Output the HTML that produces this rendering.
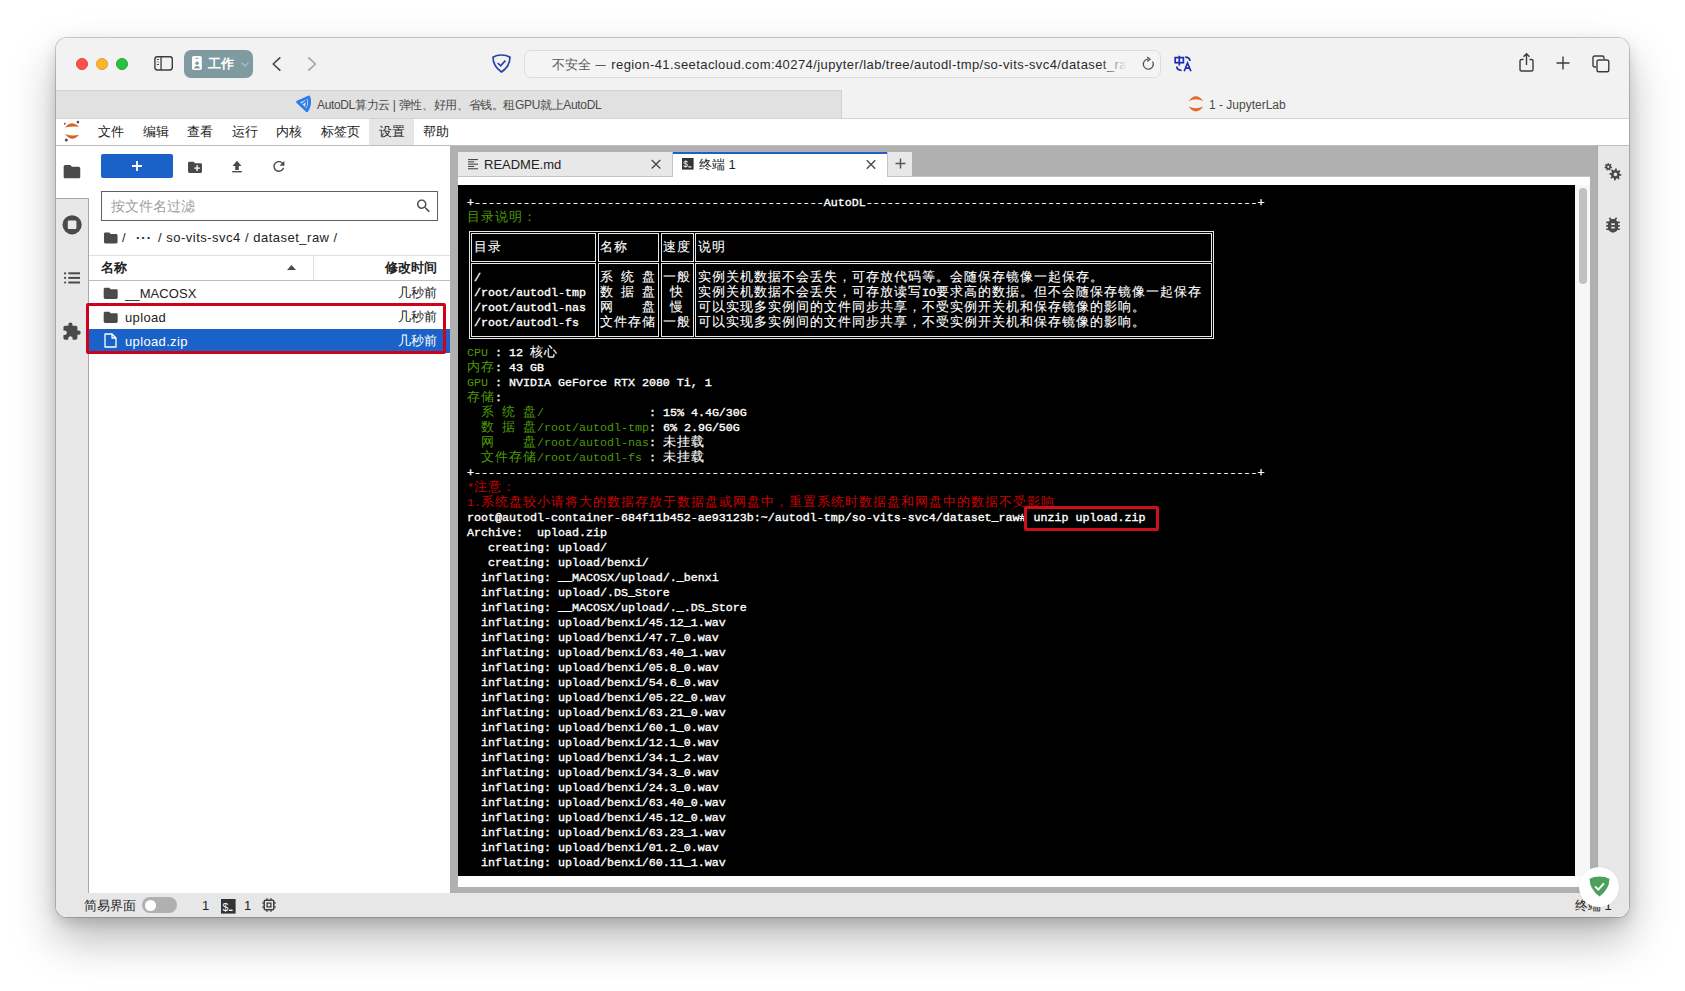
<!DOCTYPE html>
<html><head><meta charset="utf-8">
<style>
*{box-sizing:border-box}
html,body{margin:0;padding:0}
body{width:1685px;height:991px;background:#fff;position:relative;overflow:hidden;font-family:"Liberation Sans",sans-serif;color:#222}
.a{position:absolute}
#win{position:absolute;left:56px;top:38px;width:1573px;height:879px;border-radius:11px;overflow:hidden;background:#f2f2f2;box-shadow:0 22px 45px rgba(0,0,0,.28),0 6px 14px rgba(0,0,0,.14),0 0 0 1px rgba(0,0,0,.18)}
#in{position:absolute;left:-56px;top:-38px;width:1685px;height:991px}
.tl{position:absolute;left:467px;white-space:pre;font-family:"Liberation Mono",monospace;font-weight:normal;-webkit-text-stroke-width:0.35px;font-size:11.667px;line-height:15px;color:#fff}
.tl i{font-style:normal;display:inline-block;width:14px;font-size:12.5px;font-weight:500;-webkit-text-stroke-width:0.1px}
.g,.g i{color:#4e9a06;font-weight:normal;-webkit-text-stroke-width:0}
.r,.r i{color:#cc0000;font-weight:normal;-webkit-text-stroke-width:0}
.menu{position:absolute;top:119px;height:26px;line-height:26px;font-size:13px;color:#222}
.fb{font-size:13px;color:#222}
svg{position:absolute;overflow:visible}
</style></head><body>
<div id="win"><div id="in">
  <!-- toolbar -->
  <div class="a" style="left:56px;top:37px;width:1573px;height:54px;background:#f2f2f2"></div>
  <!-- traffic lights -->
  <div class="a" style="left:76px;top:58px;width:12px;height:12px;border-radius:50%;background:#fe4f4b;border:0.5px solid #e0443e"></div>
  <div class="a" style="left:96px;top:58px;width:12px;height:12px;border-radius:50%;background:#fdb32a;border:0.5px solid #dea123"></div>
  <div class="a" style="left:116px;top:58px;width:12px;height:12px;border-radius:50%;background:#2ac13e;border:0.5px solid #1aab29"></div>
  <!-- sidebar icon -->
  <svg style="left:0;top:0" width="1" height="1"><rect x="154.9" y="56.7" width="17.4" height="13.3" rx="2.4" fill="none" stroke="#3c3c3c" stroke-width="1.4"/><rect x="160.4" y="57" width="1.3" height="13" fill="#3c3c3c"/><g fill="#3c3c3c"><rect x="156.8" y="59" width="2.2" height="0.9"/><rect x="156.8" y="61.5" width="2.2" height="0.9" opacity=".6"/><rect x="156.8" y="64" width="2.2" height="0.9"/></g></svg>
  <!-- work profile button -->
  <div class="a" style="left:184px;top:50px;width:69px;height:28px;border-radius:7px;background:#7f9ba0"></div>
  <svg style="left:0;top:0" width="1" height="1"><rect x="192" y="56" width="9.8" height="14" rx="1.8" fill="#fff"/><rect x="195.5" y="57.9" width="3" height="0.9" fill="#7f9ba0"/><circle cx="197" cy="63.3" r="1.8" fill="#7f9ba0"/><path d="M193.8 68.6 Q194.5 65.8 197 65.8 Q199.5 65.8 200.2 68.6Z" fill="#7f9ba0"/></svg>
  <div class="a" style="left:207.5px;top:55px;font-size:13px;font-weight:bold;color:#fff;line-height:18px">工作</div>
  <svg style="left:241px;top:62px" width="8" height="5" viewBox="0 0 8 5"><path d="M0.5 0.5 L4 4 L7.5 0.5" fill="none" stroke="#a9bfc2" stroke-width="1.3"/></svg>
  <!-- back/forward -->
  <svg style="left:272px;top:57px" width="9" height="14" viewBox="0 0 9 14"><path d="M7.8 0.9 L1.2 7 L7.8 13.1" fill="none" stroke="#474747" stroke-width="1.7" stroke-linecap="round" stroke-linejoin="round"/></svg>
  <svg style="left:308px;top:57px" width="9" height="14" viewBox="0 0 9 14"><path d="M0.8 0.9 L7.4 7 L0.8 13.1" fill="none" stroke="#a3a3a3" stroke-width="1.7" stroke-linecap="round" stroke-linejoin="round"/></svg>
  <!-- shield -->
  <svg style="left:492px;top:54px" width="19" height="19" viewBox="0 0 19 19"><path d="M9.5 1 Q14.5 1 18 3.2 Q18 12 9.5 18 Q1 12 1 3.2 Q4.5 1 9.5 1Z" fill="none" stroke="#2c43a8" stroke-width="1.7"/><path d="M5.7 9 L8.6 11.8 L13.4 6.6" fill="none" stroke="#2c43a8" stroke-width="1.7"/></svg>
  <!-- url field -->
  <div class="a" style="left:524px;top:50px;width:637px;height:28px;border-radius:7px;border:1px solid #dcdcdc;background:#f4f4f4"></div>
  <div class="a" style="left:552px;top:56px;font-size:13px;line-height:17px;color:#5a5a5a;white-space:nowrap;width:578px;overflow:hidden">不安全 <span style="display:inline-block;transform:scaleX(0.78);margin:0 1px 0 -1px">—</span> <span style="color:#2b2b2b;letter-spacing:0.42px">region-41.seetacloud.com:40274/jupyter/lab/tree/autodl-tmp/so-vits-svc4/dataset_raw</span></div>
  <div class="a" style="left:1100px;top:52px;width:32px;height:24px;background:linear-gradient(to right,rgba(244,244,244,0),#f4f4f4 85%)"></div>
  <svg style="left:1142px;top:57px" width="13" height="14" viewBox="0 0 13 14"><path d="M10.5 4.5 A5 5 0 1 1 6.5 2.2" fill="none" stroke="#555" stroke-width="1.3"/><path d="M5.2 0 L8 2.2 L5.2 4.4" fill="none" stroke="#555" stroke-width="1.3"/></svg>
  <!-- translate -->
  <svg style="left:1174px;top:55px" width="19" height="18" viewBox="0 0 19 18"><g fill="none" stroke="#1c2fae" stroke-width="1.7"><rect x="1.2" y="2.6" width="8.2" height="5.1"/><path d="M5.3 0.8 V10.6"/><path d="M11.2 2.2 Q15.6 2.2 16 6"/><path d="M2.8 11.6 Q2.8 15.3 7.6 15.3"/><path d="M10.2 16.2 L13.5 7.9 L16.9 16.2 M11.4 13.2 H15.7"/></g></svg>
  <!-- share, plus, tabs -->
  <svg style="left:1519px;top:53px" width="15" height="19" viewBox="0 0 15 19"><path d="M4.5 6.5 H2.5 Q1 6.5 1 8 V16.5 Q1 18 2.5 18 H12.5 Q14 18 14 16.5 V8 Q14 6.5 12.5 6.5 H10.5" fill="none" stroke="#3c3c3c" stroke-width="1.4"/><path d="M7.5 12 V1 M4.5 3.8 L7.5 0.8 L10.5 3.8" fill="none" stroke="#3c3c3c" stroke-width="1.4"/></svg>
  <svg style="left:1556px;top:56px" width="14" height="14" viewBox="0 0 14 14"><path d="M7 0.5 V13.5 M0.5 7 H13.5" stroke="#3c3c3c" stroke-width="1.4"/></svg>
  <svg style="left:1592px;top:55px" width="18" height="18" viewBox="0 0 18 18"><path d="M4.3 12 H2.7 Q1 12 1 10.3 V2.7 Q1 1 2.7 1 H10.3 Q12 1 12 2.7 V4.3" fill="none" stroke="#3c3c3c" stroke-width="1.4"/><rect x="5" y="5" width="11.8" height="11.8" rx="1.8" fill="none" stroke="#3c3c3c" stroke-width="1.4"/></svg>

  <!-- browser tabs -->
  <div class="a" style="left:56px;top:90px;width:786px;height:29px;background:#e1e1e1;border-top:1px solid #d2d2d2;border-right:1px solid #d2d2d2;border-bottom:1px solid #d2d2d2"></div>
  <div class="a" style="left:842px;top:91px;width:787px;height:28px;background:#f2f2f2;border-bottom:1px solid #d2d2d2"></div>
  <svg style="left:0;top:0" width="1" height="1"><path d="M297.6 102 L308.8 97 Q311 103.5 307 110.6 Z" fill="none" stroke="#2b7def" stroke-width="3" stroke-linejoin="round"/><path d="M301.5 104.5 L306.5 100.5 L306 107" fill="none" stroke="#2b7def" stroke-width="1.6" stroke-linejoin="round"/></svg>
  <div class="a" style="left:317px;top:97px;font-size:12px;letter-spacing:-0.35px;line-height:16px;color:#4a4a4a;white-space:nowrap">AutoDL算力云 | 弹性、好用、省钱。租GPU就上AutoDL</div>
  <svg style="left:1182px;top:92px" width="28" height="24" viewBox="1182 92 28 24"><path d="M1188.5 101 Q1195.9 91.4 1203.3 101 Q1195.9 97.6 1188.5 101Z M1188.5 106.5 Q1195.9 116.3 1203.3 106.5 Q1195.9 109.9 1188.5 106.5Z" fill="#e2692a"/></svg>
  <div class="a" style="left:1209px;top:97px;font-size:12px;line-height:16px;color:#4a4a4a;white-space:nowrap">1 - JupyterLab</div>

  <!-- jupyter page -->
  <div class="a" style="left:56px;top:119px;width:1573px;height:798px;background:#fff"></div>
  <!-- menubar -->
  <div class="a" style="left:56px;top:145px;width:1573px;height:1px;background:#bdbdbd"></div>
  <svg style="left:58px;top:118px" width="28" height="28" viewBox="58 118 28 28"><path d="M64.9 127.6 Q71.8 119.2 79.1 126.7 Q71.8 125.8 64.9 127.6Z M65 133.9 Q71.8 143 79.1 134.8 Q71.8 136.6 65 133.9Z" fill="#dc5f26"/><circle cx="77.9" cy="122.1" r="1.3" fill="#4d4d4d"/><circle cx="64.9" cy="123.8" r="1" fill="#616161"/><circle cx="66.3" cy="140" r="1.5" fill="#4d4d4d"/></svg>
  <div class="menu" style="left:98px">文件</div>
  <div class="menu" style="left:143px">编辑</div>
  <div class="menu" style="left:187px">查看</div>
  <div class="menu" style="left:232px">运行</div>
  <div class="menu" style="left:276px">内核</div>
  <div class="menu" style="left:321px">标签页</div>
  <div class="a" style="left:369px;top:119px;width:45px;height:26px;background:#e6e6e6"></div>
  <div class="menu" style="left:379px">设置</div>
  <div class="menu" style="left:423px">帮助</div>

  <!-- left sidebar -->
  <div class="a" style="left:56px;top:146px;width:33px;height:747px;background:#e8e8e8;border-right:1px solid #a8a8a8"></div>
  <div class="a" style="left:56px;top:146px;width:33px;height:52px;background:#fff"></div>
  <div class="a" style="left:56px;top:198px;width:33px;height:1px;background:#a8a8a8"></div>
  <svg style="left:0;top:0" width="1" height="1"><path transform="translate(62.00 161.70) scale(0.830)" d="M10 4H4c-1.1 0-1.99.9-1.99 2L2 18c0 1.1.9 2 2 2h16c1.1 0 2-.9 2-2V8c0-1.1-.9-2-2-2h-8l-2-2z" fill="#4a4a4a"/></svg>
  <svg style="left:0;top:0" width="1" height="1"><circle cx="72.1" cy="224.8" r="9.6" fill="#4a4a4a"/><rect x="67.8" y="220.5" width="8.6" height="8.6" rx="1.2" fill="#e8e8e8"/></svg>
  <svg style="left:0;top:0" width="1" height="1"><g fill="#4a4a4a"><rect x="64" y="272.2" width="2.2" height="2.2" rx="1"/><rect x="68.3" y="272.3" width="11.7" height="2"/><rect x="64" y="276.8" width="2.2" height="2.2" rx="1"/><rect x="68.3" y="276.9" width="11.7" height="2"/><rect x="64" y="281.4" width="2.2" height="2.2" rx="1"/><rect x="68.3" y="281.5" width="11.7" height="2"/></g></svg>
  <svg style="left:0;top:0" width="1" height="1"><path transform="translate(61.80 321.60) scale(0.820)" d="M20.5 11H19V7c0-1.1-.9-2-2-2h-4V3.5C13 2.12 11.88 1 10.5 1S8 2.12 8 3.5V5H4c-1.1 0-1.99.9-1.99 2v3.8H3.5c1.49 0 2.7 1.21 2.7 2.7s-1.21 2.7-2.7 2.7H2V20c0 1.1.9 2 2 2h3.8v-1.5c0-1.49 1.21-2.7 2.7-2.7 1.49 0 2.7 1.21 2.7 2.7V22H17c1.1 0 2-.9 2-2v-4h1.5c1.38 0 2.5-1.12 2.5-2.5S21.88 11 20.5 11z" fill="#4a4a4a"/></svg>

  <!-- file browser -->
  <div class="a" style="left:89px;top:146px;width:361px;height:747px;background:#fff"></div>
  <div class="a" style="left:101px;top:154px;width:72px;height:24px;background:#1a62c8;border-radius:2px"></div>
  <svg style="left:131px;top:160px" width="12" height="12" viewBox="0 0 12 12"><path d="M6 1 V11 M1 6 H11" stroke="#fff" stroke-width="1.8"/></svg>
  <svg style="left:0;top:0" width="1" height="1"><path transform="translate(186.60 159.00) scale(0.700)" d="M20 6h-8l-2-2H4c-1.11 0-1.99.89-1.99 2L2 18c0 1.11.89 2 2 2h16c1.11 0 2-.89 2-2V8c0-1.11-.89-2-2-2zm-1 8h-3v3h-2v-3h-3v-2h3V9h2v3h3v2z" fill="#4a4a4a"/></svg>
  <svg style="left:0;top:0" width="1" height="1"><path d="M237 160.8 L241.5 166 H238.8 V170 H235.2 V166 H232.5Z" fill="#4a4a4a"/><rect x="232.2" y="171" width="9.6" height="1.4" fill="#4a4a4a"/></svg>
  <svg style="left:0;top:0" width="1" height="1"><path transform="translate(270.60 158.20) scale(0.690)" d="M17.65 6.35C16.2 4.9 14.21 4 12 4c-4.42 0-7.99 3.58-7.99 8s3.57 8 7.99 8c3.730 0 6.84-2.55 7.73-6h-2.08c-.82 2.33-3.04 4-5.65 4-3.31 0-6-2.69-6-6s2.69-6 6-6c1.66 0 3.14.69 4.22 1.78L13 11h7V4l-2.350 2.350z" fill="#4a4a4a"/></svg>
  <div class="a" style="left:101px;top:191px;width:337px;height:30px;border:1px solid #616161;background:#fff"></div>
  <div class="a" style="left:111px;top:198px;font-size:14px;line-height:17px;color:#9e9e9e">按文件名过滤</div>
  <svg style="left:0;top:0" width="1" height="1"><path transform="translate(414.80 197.20) scale(0.730)" d="M15.5 14h-.79l-.28-.27C15.41 12.59 16 11.110 16 9.5 16 5.91 13.09 3 9.5 3S3 5.91 3 9.5 5.91 16 9.5 16c1.61 0 3.09-.59 4.23-1.57l.27.28v.79l5 4.99L20.49 19l-4.99-5zm-6 0C7.01 14 5 11.99 5 9.5S7.01 5 9.5 5 14 7.01 14 9.5 11.99 14 9.5 14z" fill="#4a4a4a"/></svg>
  <!-- breadcrumbs -->
  <svg style="left:0;top:0" width="1" height="1"><path transform="translate(102.60 229.80) scale(0.680)" d="M10 4H4c-1.1 0-1.99.9-1.99 2L2 18c0 1.1.9 2 2 2h16c1.1 0 2-.9 2-2V8c0-1.1-.9-2-2-2h-8l-2-2z" fill="#4a4a4a"/></svg>
  <div class="a fb" style="left:122px;top:229px;line-height:17px">/</div>
  <div class="a fb" style="left:136px;top:229px;line-height:17px;font-weight:bold;letter-spacing:1px">···</div>
  <div class="a fb" style="left:158px;top:229px;line-height:17px;white-space:nowrap;letter-spacing:0.5px">/ so-vits-svc4 / dataset_raw /</div>
  <!-- listing header -->
  <div class="a" style="left:89px;top:255px;width:361px;height:26px;border-top:1px solid #e0e0e0;border-bottom:1px solid #bdbdbd"></div>
  <div class="a" style="left:313px;top:256px;width:1px;height:24px;background:#e0e0e0"></div>
  <div class="a fb" style="left:101px;top:259px;line-height:17px;font-weight:bold">名称</div>
  <svg style="left:287px;top:265px" width="9" height="5" viewBox="0 0 9 5"><path d="M0 5 L4.5 0 L9 5Z" fill="#4a4a4a"/></svg>
  <div class="a fb" style="left:300px;width:137px;text-align:right;top:259px;line-height:17px;font-weight:bold">修改时间</div>
  <!-- rows -->
  <svg style="left:0;top:0" width="1" height="1"><path transform="translate(102.30 285.00) scale(0.700)" d="M10 4H4c-1.1 0-1.99.9-1.99 2L2 18c0 1.1.9 2 2 2h16c1.1 0 2-.9 2-2V8c0-1.1-.9-2-2-2h-8l-2-2z" fill="#4a4a4a"/></svg>
  <div class="a fb" style="left:125px;top:284.5px;line-height:17px;letter-spacing:0.1px">__MACOSX</div>
  <div class="a fb" style="left:300px;width:137px;text-align:right;top:284px;line-height:17px">几秒前</div>
  <svg style="left:0;top:0" width="1" height="1"><path transform="translate(102.30 309.00) scale(0.700)" d="M10 4H4c-1.1 0-1.99.9-1.99 2L2 18c0 1.1.9 2 2 2h16c1.1 0 2-.9 2-2V8c0-1.1-.9-2-2-2h-8l-2-2z" fill="#4a4a4a"/></svg>
  <div class="a fb" style="left:125px;top:308.5px;line-height:17px;letter-spacing:0.35px">upload</div>
  <div class="a fb" style="left:300px;width:137px;text-align:right;top:308px;line-height:17px">几秒前</div>
  <div class="a" style="left:89px;top:329px;width:361px;height:24px;background:#1a62c8"></div>
  <svg style="left:104px;top:333px" width="13" height="15" viewBox="0 0 13 15"><path d="M1 1 H8 L12 5 V14 H1Z M8 1 V5 H12" fill="none" stroke="#fff" stroke-width="1.3" stroke-linejoin="round"/></svg>
  <div class="a fb" style="left:125px;top:332.5px;line-height:17px;color:#fff;letter-spacing:0.35px">upload.zip</div>
  <div class="a fb" style="left:300px;width:137px;text-align:right;top:332px;line-height:17px;color:#fff">几秒前</div>
  <!-- red highlight box -->
  <div class="a" style="left:86px;top:303px;width:360px;height:51px;border:3px solid #d0021b;border-radius:2px"></div>

  <!-- dock area -->
  <div class="a" style="left:450px;top:146px;width:1147px;height:747px;background:#b0b0b0"></div>
  <!-- dock tabs -->
  <div class="a" style="left:458px;top:152px;width:215px;height:25px;background:#e8e8e8;border-right:1px solid #c4c4c4"></div>
  <svg style="left:468px;top:158px" width="11" height="11" viewBox="0 0 11 11"><g fill="#4a4a4a"><rect x="0" y="1" width="10" height="1.1"/><rect x="0" y="3.3" width="6.2" height="1.1"/><rect x="0" y="5.6" width="10" height="1.1"/><rect x="0" y="7.9" width="6.2" height="1.1"/><rect x="0" y="10.2" width="10" height="1.1"/></g></svg>
  <div class="a" style="left:484px;top:156px;font-size:13px;line-height:17px;color:#222">README.md</div>
  <svg style="left:0;top:0" width="1" height="1"><path transform="translate(647.84 156.04) scale(0.680)" d="M19 6.41L17.59 5 12 10.59 6.41 5 5 6.41 10.59 12 5 17.59 6.41 19 12 13.41 17.59 19 19 17.59 13.41 12z" fill="#4a4a4a"/></svg>
  <div class="a" style="left:673px;top:152px;width:215px;height:33px;background:#fff;border-top:2px solid #1a62c8"></div>
  <svg style="left:682px;top:158px" width="12" height="12" viewBox="0 0 12 12"><rect width="11.6" height="11.6" fill="#333"/><text x="1.3" y="9" font-size="8.5" fill="#fff" font-family="Liberation Sans">$</text><rect x="6.4" y="8.3" width="3" height="1.2" fill="#fff"/></svg>
  <div class="a" style="left:699px;top:156px;font-size:13px;line-height:17px;color:#222">终端 1</div>
  <svg style="left:0;top:0" width="1" height="1"><path transform="translate(862.84 156.34) scale(0.680)" d="M19 6.41L17.59 5 12 10.59 6.41 5 5 6.41 10.59 12 5 17.59 6.41 19 12 13.41 17.59 19 19 17.59 13.41 12z" fill="#4a4a4a"/></svg>
  <div class="a" style="left:887px;top:152px;width:25px;height:25px;background:#e8e8e8;border-left:1px solid #c4c4c4"></div>
  <svg style="left:895px;top:158px" width="11" height="11" viewBox="0 0 11 11"><path d="M5.5 0.5 V10.5 M0.5 5.5 H10.5" stroke="#555" stroke-width="1.5"/></svg>
  <div class="a" style="left:458px;top:176px;width:215px;height:1px;background:#c4c4c4"></div>
  <div class="a" style="left:888px;top:176px;width:702px;height:1px;background:#c4c4c4"></div>
  <!-- terminal panel -->
  <div class="a" style="left:458px;top:177px;width:1132px;height:710px;background:#fff"></div>
  <div class="a" style="left:458px;top:185px;width:1117px;height:691px;background:#000"></div>
  <div class="a" style="left:1575px;top:185px;width:15px;height:691px;background:#f7f7f7"></div>
  <div class="a" style="left:1579px;top:188px;width:8px;height:96px;background:#c1c1c1;border-radius:4px"></div>
  <!-- terminal table borders -->
  <div class="a" style="left:469px;top:231px;width:745px;height:108px;border:1px solid #e8e8e8"></div>
  <div class="a" style="left:471px;top:233px;width:125px;height:29px;border:1px solid #e8e8e8"></div>
  <div class="a" style="left:598px;top:233px;width:61px;height:29px;border:1px solid #e8e8e8"></div>
  <div class="a" style="left:661px;top:233px;width:33px;height:29px;border:1px solid #e8e8e8"></div>
  <div class="a" style="left:695px;top:233px;width:517px;height:29px;border:1px solid #e8e8e8"></div>
  <div class="a" style="left:471px;top:263px;width:125px;height:74px;border:1px solid #e8e8e8"></div>
  <div class="a" style="left:598px;top:263px;width:61px;height:74px;border:1px solid #e8e8e8"></div>
  <div class="a" style="left:661px;top:263px;width:33px;height:74px;border:1px solid #e8e8e8"></div>
  <div class="a" style="left:695px;top:263px;width:517px;height:74px;border:1px solid #e8e8e8"></div>
<div class="tl" style="top:195.5px">+--------------------------------------------------AutoDL--------------------------------------------------------+</div>
<div class="tl" style="top:210.5px"><span class="g"><i>目</i><i>录</i><i>说</i><i>明</i><i>：</i></span></div>
<div class="tl" style="top:345.5px"><span class="g">CPU</span> : 12 <i>核</i><i>心</i></div>
<div class="tl" style="top:360.5px"><span class="g"><i>内</i><i>存</i></span>: 43 GB</div>
<div class="tl" style="top:375.5px"><span class="g">GPU</span> : NVIDIA GeForce RTX 2080 Ti, 1</div>
<div class="tl" style="top:390.5px"><span class="g"><i>存</i><i>储</i></span>:</div>
<div class="tl" style="top:405.5px"><span class="g">  <i>系</i> <i>统</i> <i>盘</i>/               </span>: 15% 4.4G/30G</div>
<div class="tl" style="top:420.5px"><span class="g">  <i>数</i> <i>据</i> <i>盘</i>/root/autodl-tmp</span>: 6% 2.9G/50G</div>
<div class="tl" style="top:435.5px"><span class="g">  <i>网</i>    <i>盘</i>/root/autodl-nas</span>: <i>未</i><i>挂</i><i>载</i></div>
<div class="tl" style="top:450.5px"><span class="g">  <i>文</i><i>件</i><i>存</i><i>储</i>/root/autodl-fs </span>: <i>未</i><i>挂</i><i>载</i></div>
<div class="tl" style="top:465.5px">+----------------------------------------------------------------------------------------------------------------+</div>
<div class="tl" style="top:480.5px"><span class="r">*<i>注</i><i>意</i><i>：</i></span></div>
<div class="tl" style="top:495.5px"><span class="r">1.<i>系</i><i>统</i><i>盘</i><i>较</i><i>小</i><i>请</i><i>将</i><i>大</i><i>的</i><i>数</i><i>据</i><i>存</i><i>放</i><i>于</i><i>数</i><i>据</i><i>盘</i><i>或</i><i>网</i><i>盘</i><i>中</i><i>，</i><i>重</i><i>置</i><i>系</i><i>统</i><i>时</i><i>数</i><i>据</i><i>盘</i><i>和</i><i>网</i><i>盘</i><i>中</i><i>的</i><i>数</i><i>据</i><i>不</i><i>受</i><i>影</i><i>响</i></span></div>
<div class="tl" style="top:510.5px">root@autodl-container-684f11b452-ae93123b:~/autodl-tmp/so-vits-svc4/dataset_raw# unzip upload.zip</div>
<div class="tl" style="top:525.5px">Archive:  upload.zip</div>
<div class="tl" style="top:540.5px">   creating: upload/</div>
<div class="tl" style="top:555.5px">   creating: upload/benxi/</div>
<div class="tl" style="top:570.5px">  inflating: __MACOSX/upload/._benxi</div>
<div class="tl" style="top:585.5px">  inflating: upload/.DS_Store</div>
<div class="tl" style="top:600.5px">  inflating: __MACOSX/upload/._.DS_Store</div>
<div class="tl" style="top:615.5px">  inflating: upload/benxi/45.12_1.wav</div>
<div class="tl" style="top:630.5px">  inflating: upload/benxi/47.7_0.wav</div>
<div class="tl" style="top:645.5px">  inflating: upload/benxi/63.40_1.wav</div>
<div class="tl" style="top:660.5px">  inflating: upload/benxi/05.8_0.wav</div>
<div class="tl" style="top:675.5px">  inflating: upload/benxi/54.6_0.wav</div>
<div class="tl" style="top:690.5px">  inflating: upload/benxi/05.22_0.wav</div>
<div class="tl" style="top:705.5px">  inflating: upload/benxi/63.21_0.wav</div>
<div class="tl" style="top:720.5px">  inflating: upload/benxi/60.1_0.wav</div>
<div class="tl" style="top:735.5px">  inflating: upload/benxi/12.1_0.wav</div>
<div class="tl" style="top:750.5px">  inflating: upload/benxi/34.1_2.wav</div>
<div class="tl" style="top:765.5px">  inflating: upload/benxi/34.3_0.wav</div>
<div class="tl" style="top:780.5px">  inflating: upload/benxi/24.3_0.wav</div>
<div class="tl" style="top:795.5px">  inflating: upload/benxi/63.40_0.wav</div>
<div class="tl" style="top:810.5px">  inflating: upload/benxi/45.12_0.wav</div>
<div class="tl" style="top:825.5px">  inflating: upload/benxi/63.23_1.wav</div>
<div class="tl" style="top:840.5px">  inflating: upload/benxi/01.2_0.wav</div>
<div class="tl" style="top:855.5px">  inflating: upload/benxi/60.11_1.wav</div>
<div class="tl" style="top:240.5px;left:474.0px"><i>目</i><i>录</i></div>
<div class="tl" style="top:240.5px;left:600.0px"><i>名</i><i>称</i></div>
<div class="tl" style="top:240.5px;left:663.0px"><i>速</i><i>度</i></div>
<div class="tl" style="top:240.5px;left:698.0px"><i>说</i><i>明</i></div>
<div class="tl" style="top:270.5px;left:474.0px">/</div>
<div class="tl" style="top:270.5px;left:600.0px"><i>系</i> <i>统</i> <i>盘</i></div>
<div class="tl" style="top:270.5px;left:663.0px"><i>一</i><i>般</i></div>
<div class="tl" style="top:270.5px;left:698.0px"><i>实</i><i>例</i><i>关</i><i>机</i><i>数</i><i>据</i><i>不</i><i>会</i><i>丢</i><i>失</i><i>，</i><i>可</i><i>存</i><i>放</i><i>代</i><i>码</i><i>等</i><i>。</i><i>会</i><i>随</i><i>保</i><i>存</i><i>镜</i><i>像</i><i>一</i><i>起</i><i>保</i><i>存</i><i>。</i></div>
<div class="tl" style="top:285.5px;left:474.0px">/root/autodl-tmp</div>
<div class="tl" style="top:285.5px;left:600.0px"><i>数</i> <i>据</i> <i>盘</i></div>
<div class="tl" style="top:285.5px;left:663.0px"> <i>快</i> </div>
<div class="tl" style="top:285.5px;left:698.0px"><i>实</i><i>例</i><i>关</i><i>机</i><i>数</i><i>据</i><i>不</i><i>会</i><i>丢</i><i>失</i><i>，</i><i>可</i><i>存</i><i>放</i><i>读</i><i>写</i>IO<i>要</i><i>求</i><i>高</i><i>的</i><i>数</i><i>据</i><i>。</i><i>但</i><i>不</i><i>会</i><i>随</i><i>保</i><i>存</i><i>镜</i><i>像</i><i>一</i><i>起</i><i>保</i><i>存</i></div>
<div class="tl" style="top:300.5px;left:474.0px">/root/autodl-nas</div>
<div class="tl" style="top:300.5px;left:600.0px"><i>网</i>    <i>盘</i></div>
<div class="tl" style="top:300.5px;left:663.0px"> <i>慢</i> </div>
<div class="tl" style="top:300.5px;left:698.0px"><i>可</i><i>以</i><i>实</i><i>现</i><i>多</i><i>实</i><i>例</i><i>间</i><i>的</i><i>文</i><i>件</i><i>同</i><i>步</i><i>共</i><i>享</i><i>，</i><i>不</i><i>受</i><i>实</i><i>例</i><i>开</i><i>关</i><i>机</i><i>和</i><i>保</i><i>存</i><i>镜</i><i>像</i><i>的</i><i>影</i><i>响</i><i>。</i></div>
<div class="tl" style="top:315.5px;left:474.0px">/root/autodl-fs</div>
<div class="tl" style="top:315.5px;left:600.0px"><i>文</i><i>件</i><i>存</i><i>储</i></div>
<div class="tl" style="top:315.5px;left:663.0px"><i>一</i><i>般</i></div>
<div class="tl" style="top:315.5px;left:698.0px"><i>可</i><i>以</i><i>实</i><i>现</i><i>多</i><i>实</i><i>例</i><i>间</i><i>的</i><i>文</i><i>件</i><i>同</i><i>步</i><i>共</i><i>享</i><i>，</i><i>不</i><i>受</i><i>实</i><i>例</i><i>开</i><i>关</i><i>机</i><i>和</i><i>保</i><i>存</i><i>镜</i><i>像</i><i>的</i><i>影</i><i>响</i><i>。</i></div>
  <!-- red box in terminal -->
  <div class="a" style="left:1024px;top:505.5px;width:135px;height:25.5px;border:3px solid #cc0f1d;border-radius:2px"></div>

  <!-- right sidebar -->
  <div class="a" style="left:1597px;top:146px;width:32px;height:747px;background:#e8e8e8;border-left:1px solid #a8a8a8"></div>
  <svg style="left:1604px;top:163px" width="18" height="18" viewBox="0 0 18 18"><path fill-rule="evenodd" fill="#4a4a4a" d="M7.20 3.66 L8.20 3.97 L7.95 5.16 L6.92 5.05 L6.21 5.98 L6.60 6.95 L5.51 7.51 L4.95 6.63 L3.79 6.65 L3.27 7.56 L2.16 7.06 L2.50 6.07 L1.75 5.18 L0.72 5.34 L0.42 4.16 L1.40 3.81 L1.63 2.67 L0.86 1.96 L1.60 0.99 L2.49 1.54 L3.52 1.01 L3.60 -0.04 L4.82 -0.07 L4.94 0.97 L6.00 1.45 L6.86 0.86 L7.64 1.79 L6.91 2.54Z M5.40 3.80 A1.10 1.10 0 1 0 3.20 3.80 A1.10 1.10 0 1 0 5.40 3.80 Z M15.77 10.89 L17.40 11.18 L17.23 12.81 L15.58 12.77 L14.85 14.13 L15.80 15.48 L14.53 16.52 L13.39 15.32 L11.91 15.77 L11.62 17.40 L9.99 17.23 L10.03 15.58 L8.67 14.85 L7.32 15.80 L6.28 14.53 L7.48 13.39 L7.03 11.910 L5.40 11.62 L5.57 9.99 L7.22 10.03 L7.95 8.67 L7.00 7.32 L8.27 6.28 L9.41 7.48 L10.89 7.03 L11.18 5.40 L12.81 5.57 L12.77 7.22 L14.13 7.95 L15.48 7.00 L16.52 8.27 L15.32 9.41Z M13.20 11.40 A1.80 1.80 0 1 0 9.60 11.40 A1.80 1.80 0 1 0 13.20 11.40 Z"/></svg>
  <svg style="left:0;top:0" width="1" height="1"><path transform="translate(1602.80 214.80) scale(0.850)" d="M20 8h-2.81c-.45-.78-1.07-1.45-1.82-1.960L17 4.41 15.59 3l-2.17 2.17C12.96 5.06 12.49 5 12 5c-.49 0-.96.06-1.41.17L8.41 3 7 4.41l1.62 1.63C7.88 6.55 7.26 7.22 6.81 8H4v2h2.09c-.05.33-.09.66-.09 1v1H4v2h2v1c0 .34.04.67.09 1H4v2h2.81c1.04 1.79 2.97 3 5.19 3s4.15-1.21 5.19-3H20v-2h-2.09c.05-.33.09-.66.09-1v-1h2v-2h-2v-1c0-.34-.04-.67-.09-1H20V8zm-6 8h-4v-2h4v2zm0-4h-4v-2h4v2z" fill="#4a4a4a"/></svg>

  <!-- status bar -->
  <div class="a" style="left:56px;top:893px;width:1573px;height:24px;background:#e7e7e7"></div>
  <div class="a" style="left:84px;top:897px;font-size:13px;line-height:17px;color:#222">简易界面</div>
  <div class="a" style="left:142px;top:897px;width:35px;height:16px;border-radius:8px;background:#b0b0b0"></div>
  <div class="a" style="left:145px;top:900px;width:10.5px;height:10.5px;border-radius:50%;background:#fff"></div>
  <div class="a" style="left:202px;top:897px;font-size:13px;line-height:17px;color:#222">1</div>
  <svg style="left:220.5px;top:898.5px" width="15" height="15" viewBox="0 0 15 15"><rect width="14.6" height="14.6" fill="#333"/><text x="1.6" y="11.6" font-size="10.5" fill="#fff" font-family="Liberation Sans">$</text><rect x="8" y="10.6" width="3.6" height="1.4" fill="#fff"/></svg>
  <div class="a" style="left:244px;top:897px;font-size:13px;line-height:17px;color:#222">1</div>
  <svg style="left:262px;top:898px" width="14" height="14" viewBox="0 0 14 14"><rect x="2.2" y="2.2" width="9.6" height="9.6" rx="1.3" fill="none" stroke="#3d3d3d" stroke-width="1.5"/><rect x="5.1" y="5.1" width="3.8" height="3.8" fill="none" stroke="#3d3d3d" stroke-width="1.3"/><path d="M5 0 V2.2 M9 0 V2.2 M5 11.8 V14 M9 11.8 V14 M0 5 H2.2 M0 9 H2.2 M11.8 5 H14 M11.8 9 H14" stroke="#3d3d3d" stroke-width="1.1"/></svg>
  <div class="a" style="left:1575px;top:897px;font-size:13px;line-height:17px;color:#222">终端 1</div>
  <!-- green shield floating -->
  <div class="a" style="left:1579px;top:866.5px;width:40px;height:40px;border-radius:50%;background:#fff;box-shadow:0 0 3px rgba(0,0,0,.08)"></div>
  <svg style="left:1589px;top:876px" width="21" height="21" viewBox="0 0 21 21"><path d="M10.5 0.5 Q16 0.5 20.5 2.8 Q20.5 13 10.5 20.5 Q0.5 13 0.5 2.8 Q5 0.5 10.5 0.5Z" fill="#4aa15a"/><path d="M6 10.5 L9.3 13.6 L15 7.4" fill="none" stroke="#fff" stroke-width="2"/></svg>
</div></div>
</body></html>
